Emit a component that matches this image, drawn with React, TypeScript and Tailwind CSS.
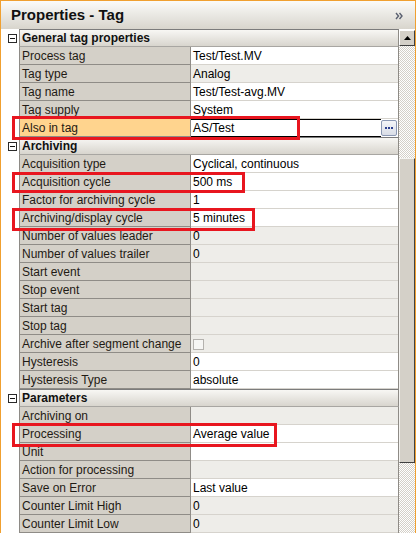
import React from "react";

type Row = { label: string; value?: string; bg: "w" | "g"; kind?: "sel" | "check" };
type Section = { title: string; rows: Row[] };

const sections: Section[] = [
  {
    title: "General tag properties",
    rows: [
      { label: "Process tag", value: "Test/Test.MV", bg: "w" },
      { label: "Tag type", value: "Analog", bg: "g" },
      { label: "Tag name", value: "Test/Test-avg.MV", bg: "w" },
      { label: "Tag supply", value: "System", bg: "w" },
      { label: "Also in tag", value: "AS/Test", bg: "w", kind: "sel" },
    ],
  },
  {
    title: "Archiving",
    rows: [
      { label: "Acquisition type", value: "Cyclical, continuous", bg: "w" },
      { label: "Acquisition cycle", value: "500 ms", bg: "w" },
      { label: "Factor for archiving cycle", value: "1", bg: "w" },
      { label: "Archiving/display cycle", value: "5 minutes", bg: "w" },
      { label: "Number of values leader", value: "0", bg: "g" },
      { label: "Number of values trailer", value: "0", bg: "g" },
      { label: "Start event", bg: "g" },
      { label: "Stop event", bg: "g" },
      { label: "Start tag", bg: "g" },
      { label: "Stop tag", bg: "g" },
      { label: "Archive after segment change", bg: "g", kind: "check" },
      { label: "Hysteresis", value: "0", bg: "w" },
      { label: "Hysteresis Type", value: "absolute", bg: "w" },
    ],
  },
  {
    title: "Parameters",
    rows: [
      { label: "Archiving on", bg: "g" },
      { label: "Processing", value: "Average value", bg: "w" },
      { label: "Unit", bg: "w" },
      { label: "Action for processing", bg: "g" },
      { label: "Save on Error", value: "Last value", bg: "w" },
      { label: "Counter Limit High", value: "0", bg: "g" },
      { label: "Counter Limit Low", value: "0", bg: "g" },
    ],
  },
];

const checker =
  "bg-[conic-gradient(#d4d0c8_25%,#ffffff_0_50%,#d4d0c8_0_75%,#ffffff_0)] bg-[length:2px_2px]";

function Header({ title }: { title: string }) {
  return (
    <div className="flex h-[18px]">
      <div className="w-[18px] bg-white flex items-center justify-center">
        <div className="relative w-[9px] h-[9px] border border-[#2a2a2a] bg-white ml-[4px]">
          <div className="absolute left-[1px] top-[3px] w-[5px] h-px bg-[#111]" />
        </div>
      </div>
      <div className="w-[380px] h-[18px] border-t border-b border-l border-r border-t-[#7c7c7c] border-b-[#a8a6a2] border-l-[#8e8b86] border-r-[#8e8b86] bg-gradient-to-b from-[#f8f7f4] to-[#d8d5ce] flex items-center pl-[2px] font-bold text-[12px] text-[#111]">
        {title}
      </div>
    </div>
  );
}

function DataRow({ row }: { row: Row }) {
  const sel = row.kind === "sel";
  const valueBg = row.bg === "w" ? "bg-white" : "bg-[#eeede9]";
  return (
    <div className="flex h-[18px]">
      <div className="w-[18px] bg-white" />
      <div className="w-[380px] flex border-l border-r border-[#8e8b86]">
        <div
          className={
            "w-[171px] h-[18px] border-b border-r border-[#8f8c87] flex items-center pl-[2px] text-[12px] text-[#1f1a14] whitespace-nowrap overflow-hidden " +
            (sel ? "bg-[#ffd48e]" : "bg-[#d4d0c8]")
          }
        >
          {row.label}
        </div>
        {sel ? (
          <div className="flex-1 h-[18px] bg-white flex items-center relative">
            <div className="absolute left-0 right-[17px] top-0 h-px bg-black" />
            <div className="absolute left-0 right-[17px] bottom-0 h-px bg-black" />
            <div className="pl-[2px] text-[12px] text-black flex-1">{row.value}</div>
            <div className="w-[16px] h-[16px] mr-[1px] rounded-[2px] border border-[#8b98b3] bg-gradient-to-b from-[#f4f5f8] to-[#d9dde6] flex items-center justify-center gap-[1px]">
              <span className="w-[2px] h-[2px] bg-[#2b3f8f]" />
              <span className="w-[2px] h-[2px] bg-[#2b3f8f]" />
              <span className="w-[2px] h-[2px] bg-[#2b3f8f]" />
            </div>
          </div>
        ) : (
          <div
            className={
              "flex-1 h-[18px] border-b border-[#d6d3cd] flex items-center pl-[2px] text-[12px] text-black " +
              valueBg
            }
          >
            {row.kind === "check" ? (
              <div className="w-[11px] h-[11px] border border-[#b4b2ae] bg-[#f6f6f4] mt-px" />
            ) : (
              row.value
            )}
          </div>
        )}
      </div>
    </div>
  );
}

function RedBox({ cls }: { cls: string }) {
  return <div className={"absolute border-[3px] border-[#e8161f] pointer-events-none " + cls} />;
}

export default function App() {
  return (
    <div
      className="relative w-[418px] h-[533px] overflow-hidden bg-white"
      style={{ fontFamily: '"Liberation Sans", Arial, sans-serif' }}
    >
      <div className="w-[416px] h-[533px] border-l border-t border-r border-[#f0a030] flex flex-col">
        <div className="h-[28px] bg-gradient-to-b from-[#fbfbf9] to-[#d8d5cd] flex items-center justify-between pl-[10px] pr-[11px] shrink-0">
          <span className="font-bold text-[15px] text-[#111]">Properties - Tag</span>
          <svg width="9" height="8" viewBox="0 0 9 8" className="mt-[2px]">
            <path d="M1 1 L3.5 4 L1 7 M4.5 1 L7 4 L4.5 7" stroke="#5a6070" strokeWidth="1.4" fill="none" />
          </svg>
        </div>
        <div className="flex flex-1 min-h-0">
          <div className="w-[398px] flex flex-col">
            {sections.map((s) => (
              <React.Fragment key={s.title}>
                <Header title={s.title} />
                {s.rows.map((r) => (
                  <DataRow key={r.label} row={r} />
                ))}
              </React.Fragment>
            ))}
          </div>
          <div className="w-[16px] flex flex-col">
            <div className="h-[17px] pt-px">
              <div className="w-[16px] h-[16px] bg-[#d4d0c8] border border-t-white border-l-white border-r-[#404040] border-b-[#404040] flex items-center justify-center">
                <svg width="7" height="4" viewBox="0 0 7 4">
                  <path d="M3.5 0 L7 4 L0 4 Z" fill="#000" />
                </svg>
              </div>
            </div>
            <div className={"h-[112px] " + checker} />
            <div className="h-[305px] bg-[#d4d0c8] border border-t-[#f4f3f0] border-l-[#f4f3f0] border-r-[#404040] border-b-[#404040]" />
            <div className={"flex-1 " + checker} />
          </div>
        </div>
      </div>
      <RedBox cls="left-[12px] top-[116px] w-[288px] h-[24px]" />
      <RedBox cls="left-[12px] top-[172px] w-[233px] h-[21px]" />
      <RedBox cls="left-[12px] top-[208px] w-[243px] h-[23px]" />
      <RedBox cls="left-[12px] top-[423px] w-[265px] h-[24px]" />
    </div>
  );
}
